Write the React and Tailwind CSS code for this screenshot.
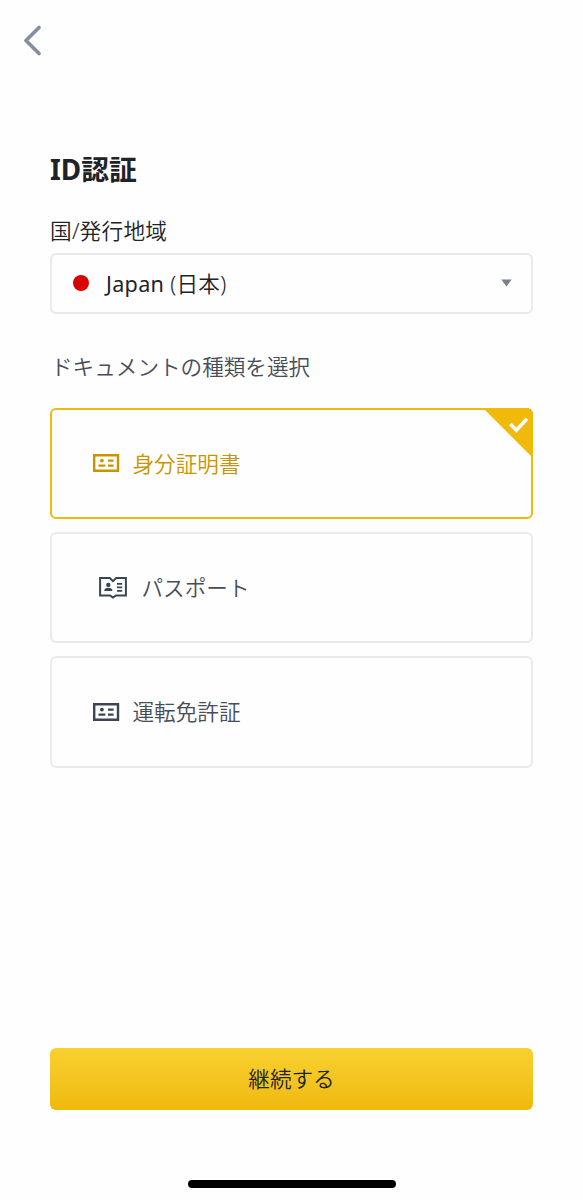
import React from "react";
import clsx from "clsx";

const IdCardIcon = () => (
  <svg width="27" height="18" viewBox="0 0 27 18" fill="none">
    <path d="M1.2 1.2h23.8v15.6H1.2z" stroke="currentColor" strokeWidth="2.4" />
    <circle cx="8.9" cy="6.6" r="1.9" fill="currentColor" />
    <path
      d="M5.5 11.6h6.8M15 6.7h5.6M15 11.6h5.6"
      stroke="currentColor"
      strokeWidth="2.2"
    />
  </svg>
);

const PassportIcon = () => (
  <svg width="28" height="22" viewBox="0 0 28 22" fill="none">
    <path
      d="M1.1 1.1h9.7L14 4.2l3.2-3.1h9.7v17.4h-9.9L14 20.6l-3-2.1H1.1z"
      stroke="currentColor"
      strokeWidth="2"
    />
    <circle cx="9.3" cy="7.9" r="2.2" fill="currentColor" />
    <path d="M5.2 13.9c0-2.1 1.9-3.1 4.1-3.1s4.1 1 4.1 3.1z" fill="currentColor" />
    <path
      d="M18 6.8h5.2M18 10.3h5.2M18 13.8h5.2"
      stroke="currentColor"
      strokeWidth="1.8"
    />
  </svg>
);

const documents = [
  { id: "id-card", label: "身分証明書", icon: IdCardIcon },
  { id: "passport", label: "パスポート", icon: PassportIcon },
  { id: "license", label: "運転免許証", icon: IdCardIcon },
];

const DocumentOption = ({ document, selected }) => {
  const Icon = document.icon;

  return (
    <button
      className={clsx(
        "relative flex h-[111.5px] w-full items-center rounded-md border-2 text-left text-[21.6px]",
        document.id === "passport" ? "gap-[14.5px] pl-[47px]" : "gap-[13px] pl-[40.5px]",
        selected
          ? "border-[#f0b90b] text-[#c99400]"
          : "border-[#eaeaec] text-[#474d57]"
      )}
    >
      <span className={selected ? "text-[#c99400]" : "text-[#3b4452]"}>
        <Icon />
      </span>
      <span className="pt-px">{document.label}</span>
      {selected && (
        <span className="absolute -right-0.5 -top-0.5 overflow-hidden rounded-tr-md text-[#f0b90b]">
          <svg width="50" height="50" viewBox="0 0 50 50" fill="none">
            <path d="M0 0h50v50z" fill="currentColor" />
            <path d="M27.3 15.9l6.1 6.3L44 10.8" stroke="#fff" strokeWidth="3.6" />
          </svg>
        </span>
      )}
    </button>
  );
};

export default function App() {
  return (
    <div className="flex h-[1200px] w-[583px] flex-col bg-[#fefefe] font-['Noto_Sans','Noto_Sans_CJK_JP',sans-serif] font-[350] text-[#1e2329]">
      {/* Header */}
      <header className="h-[148px] pl-[23px] pt-[25px]">
        <button aria-label="Back" className="block text-[#848e9c]">
          <svg width="18" height="31" viewBox="0 0 18 31" fill="none">
            <path
              d="M16 2.5L3 15.5l13 13"
              stroke="currentColor"
              strokeWidth="3.6"
              strokeLinecap="round"
              strokeLinejoin="round"
            />
          </svg>
        </button>
      </header>

      <main className="flex flex-1 flex-col px-[50px]">
        <h1 className="h-[66px] text-[27.8px] font-bold leading-[42px]">ID認証</h1>

        {/* Country */}
        <label className="h-[38.5px] pt-px text-[21.7px] leading-8 tracking-[0.2px]">
          国/発行地域
        </label>
        <div className="flex h-[61.5px] items-center rounded-md border-2 border-[#eaeaec] pl-[21px] pr-[19px]">
          <span className="size-4 rounded-full bg-[#d80000]" />
          <span className="ml-[17px] flex-1 pt-px text-[21.6px] font-normal tracking-[0.3px]">
            Japan <span className="font-[350]">(日本)</span>
          </span>
          <svg width="11" height="8" viewBox="0 0 11 8" className="text-[#76808f]">
            <path d="M.3.5h10.4L5.5 7.5z" fill="currentColor" />
          </svg>
        </div>

        {/* Document type */}
        <h2 className="mt-[36.5px] h-[57px] pl-px text-[21.6px] leading-8 text-[#474d57]">
          ドキュメントの種類を選択
        </h2>
        <div className="flex flex-col gap-[12.75px]">
          {documents.map((document) => (
            <DocumentOption
              key={document.id}
              document={document}
              selected={document.id === "id-card"}
            />
          ))}
        </div>

        <button className="mb-[90px] mt-auto h-[62px] rounded-md bg-linear-to-b from-[#f8d12f] to-[#f0b90b] text-[21.6px]">
          継続する
        </button>
      </main>

      {/* Home indicator */}
      <div className="-mt-5 mb-3 ml-[187.5px] h-2 w-[208.5px] rounded-full bg-black" />
    </div>
  );
}
